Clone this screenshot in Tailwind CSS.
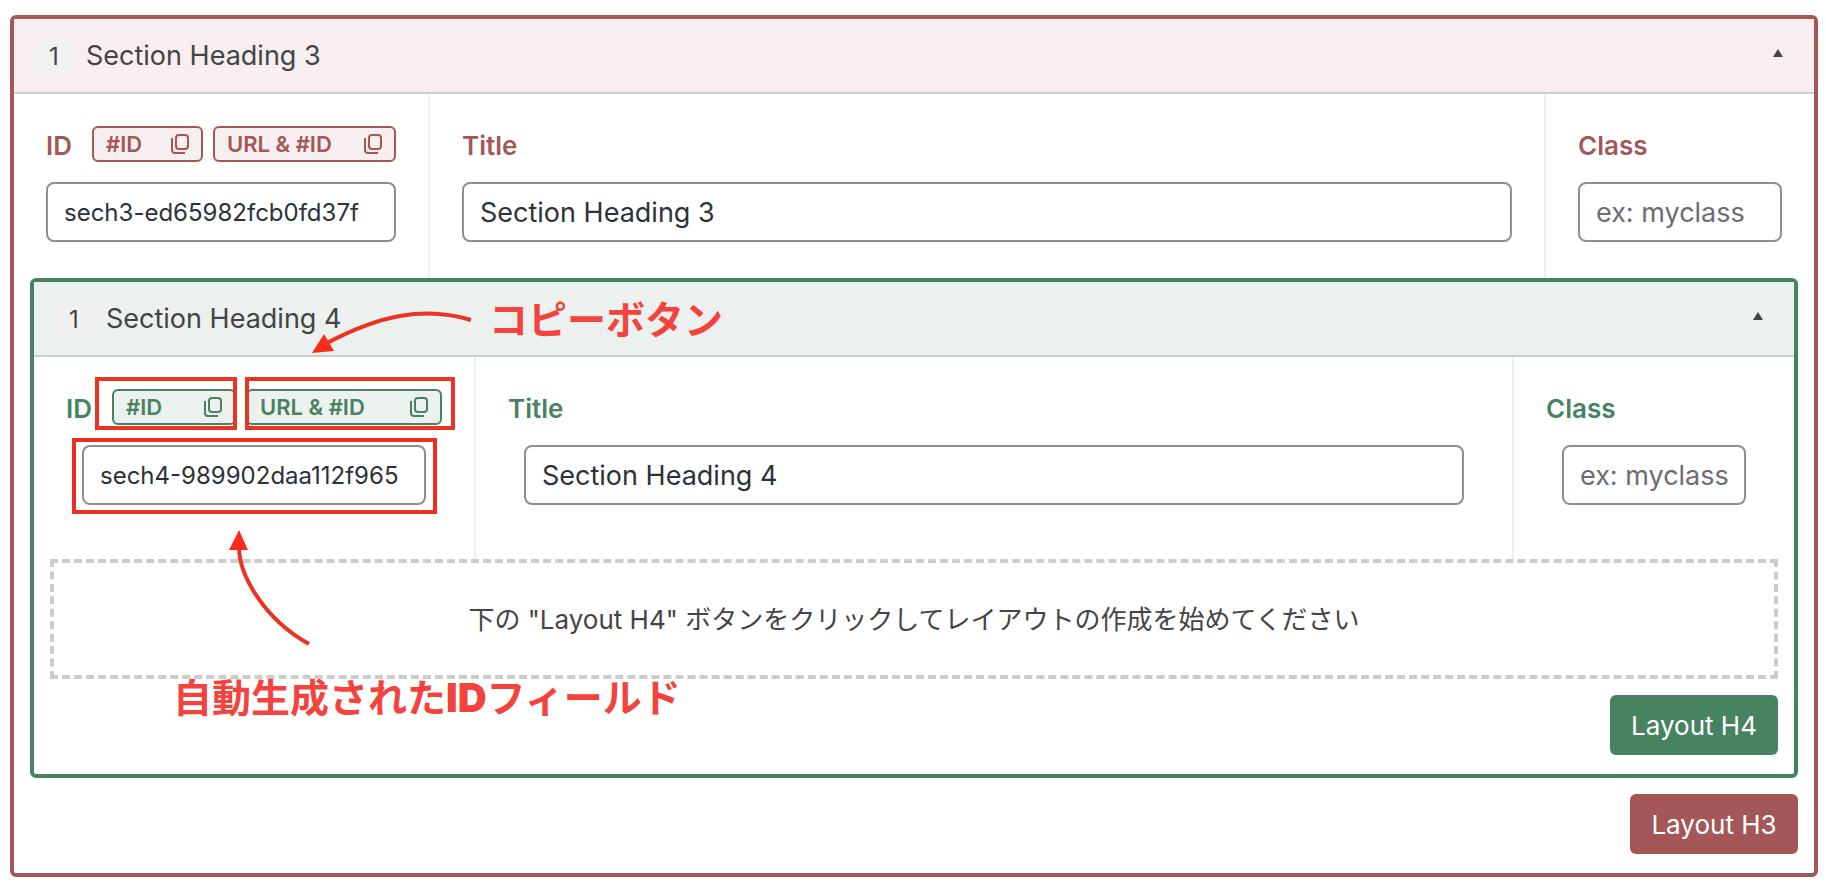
<!DOCTYPE html>
<html lang="ja">
<head>
    <meta charset="UTF-8">
    <meta name="viewport" content="width=device-width, initial-scale=1.0">
    <title>Section Layout Editor</title>
    <script src="https://cdn.jsdelivr.net/npm/@tailwindcss/browser@4"></script>
</head>
<body class="bg-white text-[#2c3338] font-['Inter','Noto_Sans_CJK_JP',sans-serif]">
    <!-- Icons -->
    <svg class="hidden">
        <symbol id="copy" viewBox="0 0 18 20" fill="none" stroke="currentColor" stroke-width="2">
            <rect x="5" y="1" width="12" height="14" rx="3"></rect>
            <path d="M1 4v12a3 3 0 0 0 3 3h10"></path>
        </symbol>
        <symbol id="caret" viewBox="0 0 10 8" fill="currentColor">
            <path d="M5 0l5 8H0z"></path>
        </symbol>
    </svg>

    <!-- H3 section -->
    <section class="mt-[15px] ml-[10px] mr-2 border-4 border-[#a35757] rounded-md">
        <header class="h-[75px] flex items-center bg-[#f7eeef] border-b-2 border-[#ccd0d0] pl-5 pr-[31px] pt-0.5 text-[#444]">
            <span class="size-10 rounded-full bg-[#f1f1f1] flex items-center justify-center text-[24px]">1</span>
            <h2 class="ml-3 flex-1 text-[27px]">Section Heading 3</h2>
            <button type="button" aria-label="Toggle" class="pb-2"><svg class="w-[10px] h-2"><use href="#caret"></use></svg></button>
        </header>

        <div class="flex text-[#a35757]">
            <div class="w-[416px] shrink-0 border-r-2 border-[#eee] px-8 pt-8 pb-9">
                <div class="h-9 flex items-center justify-between">
                    <label for="h3-id" class="pt-0.5 text-[26px] font-semibold">ID</label>
                    <div class="flex gap-[10px]">
                        <button type="button" class="w-[111px] h-9 flex items-center justify-between border-2 border-[#a35757] rounded-md bg-[#f7eeef] px-3 text-[22px] font-semibold">#ID <svg class="w-[18px] h-5"><use href="#copy"></use></svg></button>
                        <button type="button" class="w-[183px] h-9 flex items-center justify-between border-2 border-[#a35757] rounded-md bg-[#f7eeef] px-3 text-[22px] font-semibold">URL &amp; #ID <svg class="w-[18px] h-5"><use href="#copy"></use></svg></button>
                    </div>
                </div>
                <input id="h3-id" type="text" value="sech3-ed65982fcb0fd37f" class="mt-5 block w-full h-[60px] border-2 border-[#8c8f94] rounded-lg px-4 text-[24px] text-[#2c3338]">
            </div>
            <div class="flex-1 min-w-0 border-r-2 border-[#eee] px-8 pt-8 pb-9">
                <label for="h3-title" class="h-9 flex items-center pt-0.5 text-[26px] font-semibold">Title</label>
                <input id="h3-title" type="text" value="Section Heading 3" class="mt-5 block w-full h-[60px] border-2 border-[#8c8f94] rounded-lg px-4 text-[27px] text-[#2c3338]">
            </div>
            <div class="w-[268px] shrink-0 px-8 pt-8 pb-9">
                <label for="h3-class" class="h-9 flex items-center pt-0.5 text-[26px] font-semibold">Class</label>
                <input id="h3-class" type="text" placeholder="ex: myclass" class="mt-5 block w-full h-[60px] border-2 border-[#8c8f94] rounded-lg px-4 text-[27px] text-[#2c3338] placeholder:text-[#6b6d71]">
            </div>
        </div>

        <!-- H4 section -->
        <section class="relative mx-4 border-4 border-[#478261] rounded-md">
            <header class="h-[75px] flex items-center bg-[#ecf1ef] border-b-2 border-[#c9d0cd] pl-5 pr-[31px] pt-0.5 text-[#444]">
                <span class="size-10 rounded-full bg-[#f0f0f0] flex items-center justify-center text-[24px]">1</span>
                <h3 class="ml-3 flex-1 text-[27px]">Section Heading 4</h3>
                <button type="button" aria-label="Toggle" class="pb-2"><svg class="w-[10px] h-2"><use href="#caret"></use></svg></button>
            </header>

            <div class="flex text-[#478261]">
                <div class="w-[442px] shrink-0 border-r-2 border-[#eee] px-8 pt-8 pb-[54px]">
                    <div class="h-9 flex items-center justify-between">
                        <label for="h4-id" class="pt-0.5 text-[26px] font-semibold">ID</label>
                        <div class="flex gap-[10px]">
                            <button type="button" class="w-[124px] h-9 flex items-center justify-between border-2 border-[#478261] rounded-md bg-[#ecf1ef] px-3 text-[22px] font-semibold">#ID <svg class="w-[18px] h-5"><use href="#copy"></use></svg></button>
                            <button type="button" class="w-[196px] h-9 flex items-center justify-between border-2 border-[#478261] rounded-md bg-[#ecf1ef] px-3 text-[22px] font-semibold">URL &amp; #ID <svg class="w-[18px] h-5"><use href="#copy"></use></svg></button>
                        </div>
                    </div>
                    <div class="mt-5 px-4">
                        <input id="h4-id" type="text" value="sech4-989902daa112f965" class="block w-full h-[60px] border-2 border-[#8c8f94] rounded-lg px-4 text-[24px] text-[#2c3338]">
                    </div>
                </div>
                <div class="flex-1 min-w-0 border-r-2 border-[#eee] px-8 pt-8 pb-[54px]">
                    <label for="h4-title" class="h-9 flex items-center pt-0.5 text-[26px] font-semibold">Title</label>
                    <div class="mt-5 px-4">
                        <input id="h4-title" type="text" value="Section Heading 4" class="block w-full h-[60px] border-2 border-[#8c8f94] rounded-lg px-4 text-[27px] text-[#2c3338]">
                    </div>
                </div>
                <div class="w-[280px] shrink-0 px-8 pt-8 pb-[54px]">
                    <label for="h4-class" class="h-9 flex items-center pt-0.5 text-[26px] font-semibold">Class</label>
                    <div class="mt-5 px-4">
                        <input id="h4-class" type="text" placeholder="ex: myclass" class="block w-full h-[60px] border-2 border-[#8c8f94] rounded-lg px-4 text-[27px] text-[#2c3338] placeholder:text-[#6b6d71]">
                    </div>
                </div>
            </div>

            <div class="px-4 pb-[19px]">
                <p class="h-[120px] flex items-center justify-center border-4 border-dashed border-[#ccc] text-[26px] text-[#444]">下の "Layout H4" ボタンをクリックしてレイアウトの作成を始めてください</p>
                <div class="mt-4 flex justify-end">
                    <button type="button" class="w-[168px] h-[60px] rounded-md bg-[#478261] text-white text-[26px]">Layout H4</button>
                </div>
            </div>

            <!-- Annotations, measured from the corner of the H4 section -->
            <div class="absolute inset-0 pointer-events-none text-[#f4433c]">
                <div class="absolute left-[61px] top-[95px] w-[142px] h-[53px] border-4 border-[#e93323]"></div>
                <div class="absolute left-[211px] top-[95px] w-[210px] h-[53px] border-4 border-[#e93323]"></div>
                <div class="absolute left-[38px] top-[156px] w-[365px] h-[76px] border-4 border-[#ec2d20]"></div>
                <svg class="absolute left-0 top-0 w-[480px] h-[400px]" fill="none" stroke="#ea3323" stroke-width="4">
                    <path d="M437 38C390 24 346 33 293 61"></path>
                    <path d="M278 71L290 52L300 69Z" fill="#fb2c1c" stroke="none"></path>
                    <path d="M275 362C230 337 205 293 205 265"></path>
                    <path d="M205 248L214 268L195 268Z" fill="#fb2c1c" stroke="none"></path>
                </svg>
                <span class="absolute left-[455px] top-[8px] leading-[60px] text-[39px] font-bold whitespace-nowrap">コピーボタン</span>
                <span class="absolute left-[139px] top-[386px] leading-[60px] text-[39px] font-bold whitespace-nowrap">自動生成された<b class="font-black text-[40px]">ID</b>フィールド</span>
            </div>
        </section>

        <div class="mt-4 mx-4 mb-[19px] flex justify-end">
            <button type="button" class="w-[168px] h-[60px] rounded-md bg-[#a35757] text-white text-[26px]">Layout H3</button>
        </div>
    </section>
</body>
</html>
